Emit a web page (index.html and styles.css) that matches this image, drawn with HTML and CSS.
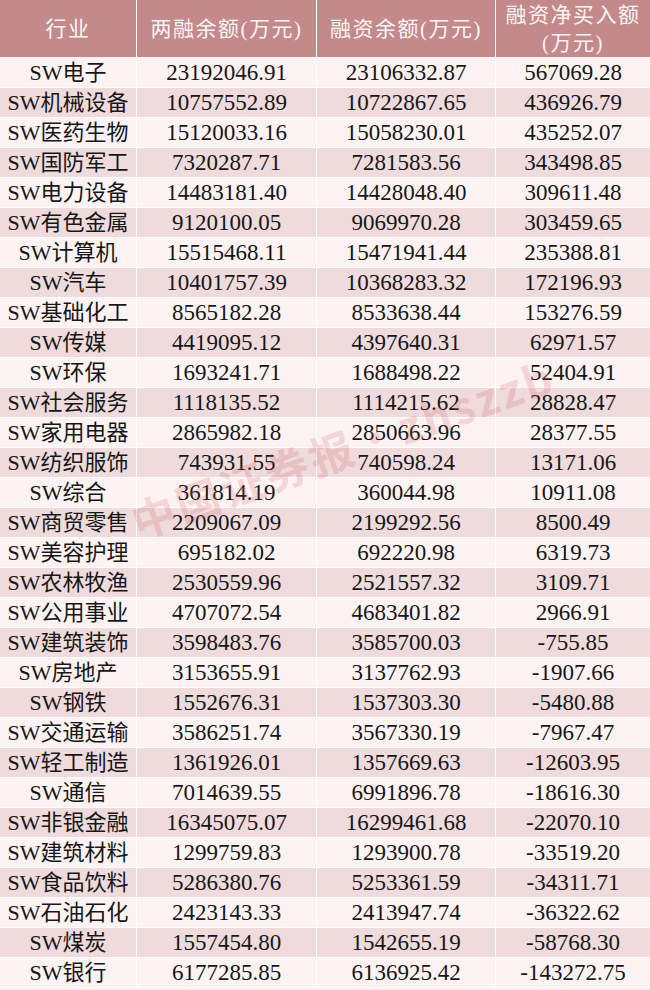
FILE: index.html
```html
<!DOCTYPE html>
<html lang="zh">
<head>
<meta charset="utf-8">
<title>融资数据</title>
<link rel="stylesheet" href="styles.css">
</head>
<body>
<div class="wrap">
<table class="tbl">
<colgroup><col class="c1"><col class="c2"><col class="c3"><col class="c4"></colgroup>
<thead>
<tr><th>行业</th><th>两融余额(万元)</th><th>融资余额(万元)</th><th class="two">融资净买入额<br>(万元)</th></tr>
</thead>
<tbody>
<tr><td>SW电子</td><td>23192046.91</td><td>23106332.87</td><td>567069.28</td></tr>
<tr><td>SW机械设备</td><td>10757552.89</td><td>10722867.65</td><td>436926.79</td></tr>
<tr><td>SW医药生物</td><td>15120033.16</td><td>15058230.01</td><td>435252.07</td></tr>
<tr><td>SW国防军工</td><td>7320287.71</td><td>7281583.56</td><td>343498.85</td></tr>
<tr><td>SW电力设备</td><td>14483181.40</td><td>14428048.40</td><td>309611.48</td></tr>
<tr><td>SW有色金属</td><td>9120100.05</td><td>9069970.28</td><td>303459.65</td></tr>
<tr><td>SW计算机</td><td>15515468.11</td><td>15471941.44</td><td>235388.81</td></tr>
<tr><td>SW汽车</td><td>10401757.39</td><td>10368283.32</td><td>172196.93</td></tr>
<tr><td>SW基础化工</td><td>8565182.28</td><td>8533638.44</td><td>153276.59</td></tr>
<tr><td>SW传媒</td><td>4419095.12</td><td>4397640.31</td><td>62971.57</td></tr>
<tr><td>SW环保</td><td>1693241.71</td><td>1688498.22</td><td>52404.91</td></tr>
<tr><td>SW社会服务</td><td>1118135.52</td><td>1114215.62</td><td>28828.47</td></tr>
<tr><td>SW家用电器</td><td>2865982.18</td><td>2850663.96</td><td>28377.55</td></tr>
<tr><td>SW纺织服饰</td><td>743931.55</td><td>740598.24</td><td>13171.06</td></tr>
<tr><td>SW综合</td><td>361814.19</td><td>360044.98</td><td>10911.08</td></tr>
<tr><td>SW商贸零售</td><td>2209067.09</td><td>2199292.56</td><td>8500.49</td></tr>
<tr><td>SW美容护理</td><td>695182.02</td><td>692220.98</td><td>6319.73</td></tr>
<tr><td>SW农林牧渔</td><td>2530559.96</td><td>2521557.32</td><td>3109.71</td></tr>
<tr><td>SW公用事业</td><td>4707072.54</td><td>4683401.82</td><td>2966.91</td></tr>
<tr><td>SW建筑装饰</td><td>3598483.76</td><td>3585700.03</td><td>-755.85</td></tr>
<tr><td>SW房地产</td><td>3153655.91</td><td>3137762.93</td><td>-1907.66</td></tr>
<tr><td>SW钢铁</td><td>1552676.31</td><td>1537303.30</td><td>-5480.88</td></tr>
<tr><td>SW交通运输</td><td>3586251.74</td><td>3567330.19</td><td>-7967.47</td></tr>
<tr><td>SW轻工制造</td><td>1361926.01</td><td>1357669.63</td><td>-12603.95</td></tr>
<tr><td>SW通信</td><td>7014639.55</td><td>6991896.78</td><td>-18616.30</td></tr>
<tr><td>SW非银金融</td><td>16345075.07</td><td>16299461.68</td><td>-22070.10</td></tr>
<tr><td>SW建筑材料</td><td>1299759.83</td><td>1293900.78</td><td>-33519.20</td></tr>
<tr><td>SW食品饮料</td><td>5286380.76</td><td>5253361.59</td><td>-34311.71</td></tr>
<tr><td>SW石油石化</td><td>2423143.33</td><td>2413947.74</td><td>-36322.62</td></tr>
<tr><td>SW煤炭</td><td>1557454.80</td><td>1542655.19</td><td>-58768.30</td></tr>
<tr><td>SW银行</td><td>6177285.85</td><td>6136925.42</td><td>-143272.75</td></tr>
</tbody>
</table>
<div class="watermark">中国证券报·zhszzb</div>
</div>
</body>
</html>
```

FILE: styles.css
```css
html, body {
  margin: 0;
  padding: 0;
  background: #fdf3f3;
}

.wrap {
  position: relative;
  width: 650px;
  height: 990px;
  overflow: hidden;
  background: #fdf3f3;
}

.tbl {
  width: 650px;
  border-collapse: separate;
  border-spacing: 0;
  table-layout: fixed;
  font-family: "Liberation Serif", "Noto Sans CJK SC", serif;
  color: #161616;
}

.c1 { width: 137px; }
.c2 { width: 180px; }
.c3 { width: 179px; }
.c4 { width: 154px; }

.tbl th,
.tbl td {
  padding: 0;
  text-align: center;
  white-space: nowrap;
  border-right: 1px solid #ffffff;
  border-bottom: 1px solid #ffffff;
}

.tbl th:last-child,
.tbl td:last-child {
  border-right: none;
}

.tbl th {
  height: 57px;
  background: #c4898a;
  color: #fdf6f6;
  font-weight: normal;
  font-size: 21px;
  letter-spacing: 1.5px;
  line-height: 28px;
}

.tbl td {
  height: 29px;
  font-size: 23px;
  line-height: 29px;
  background: #fdf3f3;
}

.tbl td:first-child {
  font-size: 22px;
}

.tbl tbody tr:nth-child(even) td {
  background: #efdbdc;
}

.watermark {
  position: absolute;
  left: 120px;
  top: 418px;
  width: 430px;
  height: 64px;
  line-height: 64px;
  text-align: center;
  font-family: "Noto Sans CJK SC", sans-serif;
  font-weight: bold;
  font-size: 44px;
  letter-spacing: 3px;
  color: rgba(205, 80, 80, 0.2);
  transform: rotate(-19.5deg);
  transform-origin: center;
  pointer-events: none;
  white-space: nowrap;
}
```
